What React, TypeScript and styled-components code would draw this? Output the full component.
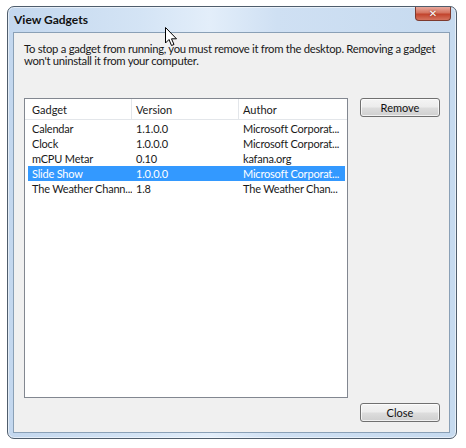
import React from "react";
import styled, { createGlobalStyle } from "styled-components";

const Global = createGlobalStyle`
  html, body { margin: 0; padding: 0; background: #ffffff; }
  body { font-family: Lato, "Noto Sans", sans-serif; font-size: 11px; color: #1a1a1a; }
`;

const Page = styled.div`
  position: relative;
  width: 466px;
  height: 448px;
  padding: 6px 0 0 7px;
  box-sizing: border-box;
`;

const Window = styled.div`
  width: 450px;
  height: 433px;
  box-sizing: border-box;
  border: 1px solid #4f5d6c;
  border-radius: 7px;
  background: linear-gradient(90deg, #c3d7ee 0%, #d4e4f5 30%, #e3eefa 45%, #cfe0f3 60%, #c6daef 100%);
  box-shadow: inset 0 0 0 1px rgba(255, 255, 255, 0.55);
  display: flex;
  flex-direction: column;
`;

const TitleBar = styled.div`
  height: 25px;
  display: flex;
  align-items: flex-start;
  justify-content: space-between;
  padding: 0 5px 0 6px;
`;

const Title = styled.div`
  font-weight: 700;
  font-size: 12px;
  line-height: 12px;
  margin-top: 7px;
  color: #111;
`;

const CloseX = styled.div`
  width: 36px;
  height: 14px;
  box-sizing: border-box;
  border: 1px solid #7d3a2e;
  border-top: none;
  border-radius: 0 0 4px 4px;
  background: linear-gradient(180deg, #e9a89c 0%, #d4735f 45%, #c2442d 55%, #d5735e 100%);
  display: flex;
  align-items: center;
  justify-content: center;
  color: #fff;
  font-size: 10px;
  font-weight: 700;
  line-height: 10px;
  font-family: "DejaVu Sans", sans-serif;
  text-shadow: 0 0 2px #7a2a1e;
`;

const Client = styled.div`
  flex: 1;
  margin: 0 6px 5px 5px;
  border: 1px solid #8aa0b6;
  background: #f0f0f0;
  display: flex;
  flex-direction: column;
  padding: 10px 9px 10px 10px;
  box-sizing: border-box;
`;

const Description = styled.p`
  margin: 0;
  font-size: 11.3px;
  letter-spacing: -0.3px;
  line-height: 12px;
  white-space: nowrap;
`;

const Body = styled.div`
  display: flex;
  gap: 12px;
  margin-top: 31px;
`;

const ListBox = styled.div`
  width: 325px;
  height: 300px;
  box-sizing: border-box;
  border: 1px solid #828790;
  background: #fff;
  display: flex;
  flex-direction: column;
`;

const Header = styled.div`
  display: grid;
  grid-template-columns: 107px 107px 1fr;
  height: 20px;
  border-bottom: 1px solid #e3e6ea;
  margin-bottom: 1px;
`;

const HeaderCell = styled.div<{ $pad: number; $sep?: boolean }>`
  padding-left: ${(p) => p.$pad}px;
  display: flex;
  align-items: center;
  border-right: ${(p) => (p.$sep ? "1px solid #e3e6ea" : "none")};
`;

const Row = styled.div<{ $selected?: boolean }>`
  display: grid;
  grid-template-columns: 104px 107px 1fr;
  height: 15px;
  align-items: center;
  margin: 0 2px 0 3px;
  background: ${(p) => (p.$selected ? "#3399ff" : "transparent")};
  color: ${(p) => (p.$selected ? "#fff" : "#1a1a1a")};
  white-space: nowrap;
  overflow: hidden;
`;

const Cell = styled.div<{ $pad: number }>`
  padding-left: ${(p) => p.$pad}px;
  line-height: 15px;
  letter-spacing: -0.2px;
  overflow: hidden;
  white-space: nowrap;
`;

const Side = styled.div`
  display: flex;
  flex-direction: column;
`;

const Button = styled.button`
  width: 80px;
  height: 19px;
  box-sizing: border-box;
  border: 1px solid #707070;
  border-radius: 3px;
  background: linear-gradient(180deg, #f4f4f4 0%, #ececec 48%, #dddddd 52%, #cfcfcf 100%);
  box-shadow: inset 0 0 0 1px rgba(255, 255, 255, 0.7);
  font-family: Lato, "Noto Sans", sans-serif;
  font-size: 11px;
  color: #111;
  padding: 0;
  line-height: 15px;
`;

const Footer = styled.div`
  display: flex;
  justify-content: flex-end;
  margin-top: 5px;
`;

const Cursor = styled.svg`
  position: absolute;
  left: 165px;
  top: 27px;
`;

const rows = [
  ["Calendar", "1.1.0.0", "Microsoft Corporat..."],
  ["Clock", "1.0.0.0", "Microsoft Corporat..."],
  ["mCPU Metar", "0.10", "kafana.org"],
  ["Slide Show", "1.0.0.0", "Microsoft Corporat..."],
  ["The Weather Chann...", "1.8", "The Weather Chan..."],
];

export default function App() {
  return (
    <Page>
      <Global />
      <Window>
        <TitleBar>
          <Title>View Gadgets</Title>
          <CloseX>✕</CloseX>
        </TitleBar>
        <Client>
          <Description>
            To stop a gadget from running, you must remove it from the desktop. Removing a gadget
            <br />
            won't uninstall it from your computer.
          </Description>
          <Body>
            <ListBox>
              <Header>
                <HeaderCell $pad={7} $sep>Gadget</HeaderCell>
                <HeaderCell $pad={4} $sep>Version</HeaderCell>
                <HeaderCell $pad={4}>Author</HeaderCell>
              </Header>
              {rows.map((r, i) => (
                <Row key={i} $selected={i === 3}>
                  <Cell $pad={4}>{r[0]}</Cell>
                  <Cell $pad={4}>{r[1]}</Cell>
                  <Cell $pad={4}>{r[2]}</Cell>
                </Row>
              ))}
            </ListBox>
            <Side>
              <Button>Remove</Button>
            </Side>
          </Body>
          <Footer>
            <Button>Close</Button>
          </Footer>
        </Client>
      </Window>
      <Cursor width="13" height="20" viewBox="0 0 13 20">
        <path d="M0.5 0.5 L0.5 16 L4 12.5 L6.5 18.5 L9 17.5 L6.5 11.8 L11.5 11.8 Z" fill="#fff" stroke="#000" strokeWidth="1" strokeLinejoin="round" />
      </Cursor>
    </Page>
  );
}
